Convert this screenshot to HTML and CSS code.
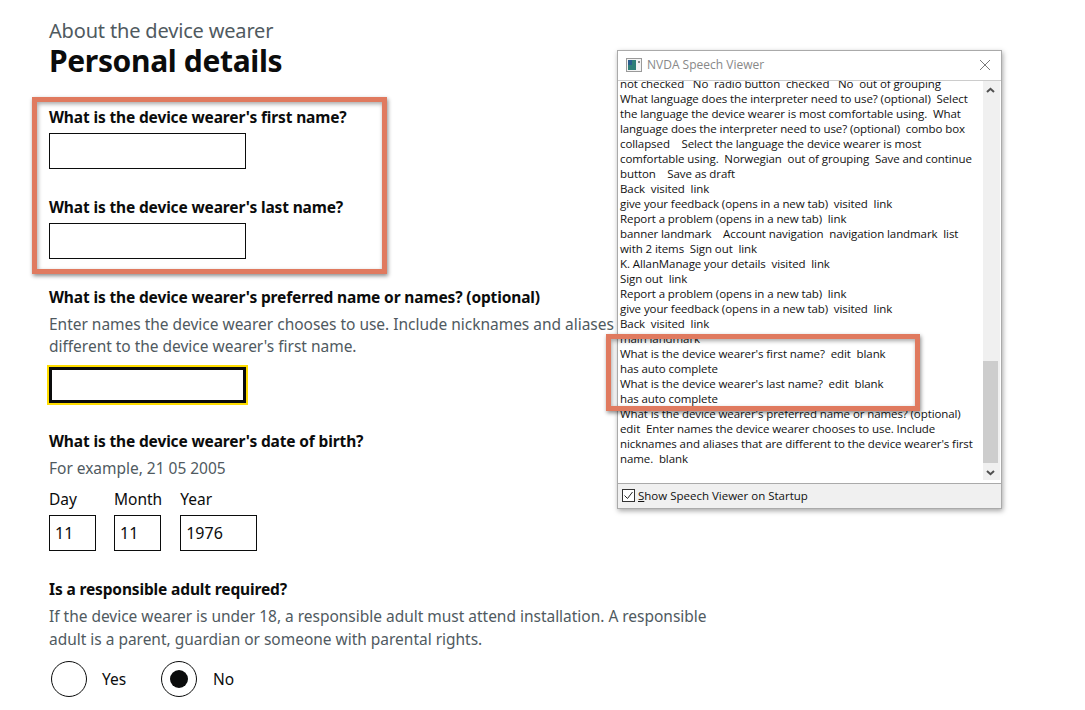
FILE: index.html
```html
<!DOCTYPE html>
<html lang="en">
<head>
<meta charset="utf-8">
<title>Personal details</title>
<link rel="stylesheet" href="styles.css">
</head>
<body>
<main class="form">
  <div class="caption">About the device wearer</div>
  <h1 class="title">Personal details</h1>

  <div class="group first">
    <label class="label">What is the device wearer's first name?</label>
    <div class="input wide"></div>
  </div>
  <div class="group g-last">
    <label class="label">What is the device wearer's last name?</label>
    <div class="input wide"></div>
  </div>
  <div class="group g-pref">
    <label class="label">What is the device wearer's preferred name or names? (optional)</label>
    <p class="hint">Enter names the device wearer chooses to use. Include nicknames and aliases that are<br>different to the device wearer's first name.</p>
    <div class="input wide focused"></div>
  </div>
  <div class="group g-dob">
    <label class="label">What is the device wearer's date of birth?</label>
    <p class="hint one">For example, 21 05 2005</p>
    <div class="date">
      <div class="date-item"><span class="date-label">Day</span><div class="input small">11</div></div>
      <div class="date-item"><span class="date-label">Month</span><div class="input small">11</div></div>
      <div class="date-item"><span class="date-label">Year</span><div class="input year">1976</div></div>
    </div>
  </div>
  <div class="group g-adult">
    <label class="label">Is a responsible adult required?</label>
    <p class="hint">If the device wearer is under 18, a responsible adult must attend installation. A responsible<br>adult is a parent, guardian or someone with parental rights.</p>
    <div class="radios">
      <div class="radio-item"><span class="radio"></span><span class="radio-label">Yes</span></div>
      <div class="radio-item"><span class="radio checked"></span><span class="radio-label">No</span></div>
    </div>
  </div>
</main>

<section class="viewer">
  <header class="viewer-title">
    <svg class="app-icon" width="16" height="14" viewBox="0 0 16 14"><rect x="0.5" y="0.5" width="15" height="13" fill="#f4f4f4" stroke="#9a9a9a"/><rect x="2" y="2" width="8" height="10" fill="#2f7f78"/><rect x="2" y="2" width="4" height="5" fill="#2a5f8f"/><rect x="12" y="3" width="2" height="2" fill="#8a8a8a"/></svg>
    <span class="viewer-name">NVDA Speech Viewer</span>
    <svg class="close" width="12" height="12" viewBox="0 0 12 12"><path d="M1 1l10 10M11 1L1 11" stroke="#7a7a7a" stroke-width="1" fill="none"/></svg>
  </header>
  <div class="viewer-body">
    <div class="log">
      <div>not checked   No  radio button  checked   No  out of grouping</div>
      <div>What language does the interpreter need to use? (optional)  Select</div>
      <div>the language the device wearer is most comfortable using.  What</div>
      <div>language does the interpreter need to use? (optional)  combo box</div>
      <div>collapsed    Select the language the device wearer is most</div>
      <div>comfortable using.  Norwegian  out of grouping  Save and continue</div>
      <div>button    Save as draft</div>
      <div>Back  visited  link</div>
      <div>give your feedback (opens in a new tab)  visited  link</div>
      <div>Report a problem (opens in a new tab)  link</div>
      <div>banner landmark    Account navigation  navigation landmark  list</div>
      <div>with 2 items  Sign out  link</div>
      <div>K. AllanManage your details  visited  link</div>
      <div>Sign out  link</div>
      <div>Report a problem (opens in a new tab)  link</div>
      <div>give your feedback (opens in a new tab)  visited  link</div>
      <div>Back  visited  link</div>
      <div>main landmark</div>
      <div>What is the device wearer's first name?  edit  blank</div>
      <div>has auto complete</div>
      <div>What is the device wearer's last name?  edit  blank</div>
      <div>has auto complete</div>
      <div>What is the device wearer's preferred name or names? (optional)</div>
      <div>edit  Enter names the device wearer chooses to use. Include</div>
      <div>nicknames and aliases that are different to the device wearer's first</div>
      <div>name.  blank</div>
    </div>
    <div class="scrollbar">
      <svg class="arrow" width="17" height="16" viewBox="0 0 17 16"><path d="M4 11l3.5-3.2L11 11" stroke="#505050" stroke-width="2" fill="none"/></svg>
      <div class="track"><div class="thumb"></div></div>
      <svg class="arrow" width="17" height="16" viewBox="0 0 17 16"><path d="M4 7l3.5 3.2L11 7" stroke="#505050" stroke-width="2" fill="none"/></svg>
    </div>
  </div>
  <footer class="viewer-foot">
    <svg width="13" height="13" viewBox="0 0 13 13"><rect x="0.5" y="0.5" width="12" height="12" fill="#fff" stroke="#333"/><path d="M2.5 6.5l3 3 5-6.5" stroke="#222" fill="none"/></svg>
    <span><u>S</u>how Speech Viewer on Startup</span>
  </footer>
</section>

<div class="mark mark-form"></div>
<div class="mark mark-log"></div>
</body>
</html>
```

FILE: styles.css
```css
* { box-sizing: border-box; }
html, body { margin: 0; padding: 0; background: #fff; }
body { width: 1085px; height: 710px; overflow: hidden; position: relative; color: #0b0c0c; font-family: "Noto Sans", sans-serif; }

.form { padding: 19px 0 0 49px; }
.caption { font-size: 20px; line-height: 24px; color: #505a5f; letter-spacing: -0.17px; }
.title { margin: 0; font-size: 30px; line-height: 36px; font-weight: 700; letter-spacing: -0.35px; }

.group { display: block; }
.first { margin-top: 28px; }
.g-last { margin-top: 28px; }
.g-pref { margin-top: 28px; }
.g-dob { margin-top: 28px; }
.g-adult { margin-top: 28px; }

.label { display: block; font-size: 15.5px; line-height: 20px; font-weight: 700; letter-spacing: -0.14px; }
.hint { margin: 6px 0 10px; font-size: 15.5px; line-height: 22px; color: #505a5f; white-space: nowrap; letter-spacing: -0.02px; }
.hint.one { margin: 6px 0 9px; }
.g-adult .hint { margin: 5.5px 0 0; line-height: 23px; }

.input { border: 1.5px solid #0b0c0c; height: 36px; margin-top: 6px; font-size: 16px; line-height: 34px; padding-left: 5px; background: #fff; }
.wide { width: 197px; }
.focused { border-width: 3px; outline: 2px solid #fd0; margin-top: 10px; height: 36px; }
.small { width: 47px; }
.year { width: 77px; }

.date { display: flex; gap: 18px; }
.date-item { display: flex; flex-direction: column; }
.date-label { font-size: 15.5px; line-height: 22px; }
.date .input { margin-top: 5px; }

.radios { display: flex; margin-top: 10.5px; padding-left: 2px; }
.radio-item { display: flex; align-items: center; }
.radio { position: relative; width: 36px; height: 36px; border: 1.5px solid #0b0c0c; border-radius: 50%; }
.radio.checked::after { content: ""; position: absolute; left: 7.5px; top: 7.5px; width: 18px; height: 18px; border-radius: 50%; background: #0b0c0c; }
.radio-label { font-size: 15.5px; margin-left: 15px; width: 59px; }
.radio-item + .radio-item .radio-label { margin-left: 16px; }

.viewer { position: absolute; left: 617px; top: 50px; width: 385px; height: 459px; border: 1px solid #aaa; background: #fff; box-shadow: 1px 2px 5px rgba(0,0,0,.35); display: flex; flex-direction: column; font-family: "Open Sans", sans-serif; }
.viewer-title { height: 30px; display: flex; align-items: center; padding: 0 10px 2px 8px; gap: 5px; border-bottom: 1px solid #ccc; font-size: 12px; color: #888; flex: none; }
.viewer-name { flex: 1; }
.viewer-body { flex: 1; display: flex; overflow: hidden; min-height: 0; padding-bottom: 3px; }
.log { flex: 1; padding: 0 0 0 2px; margin-top: -5px; font-size: 11.5px; line-height: 15px; color: #111; letter-spacing: -0.09px; }
.log div { white-space: pre; }
.scrollbar { width: 17px; margin-right: 1px; background: #f0f0f0; display: flex; flex-direction: column; flex: none; }
.arrow { flex: none; }
.track { flex: 1; position: relative; }
.thumb { position: absolute; left: 0; right: 2px; bottom: 1px; height: 102px; background: #cdcdcd; }
.viewer-foot { height: 25px; flex: none; background: #f0f0f0; border-top: 1px solid #aaa; display: flex; align-items: center; gap: 3px; padding: 0 0 2px 4px; font-size: 11.5px; color: #111; }

.mark { position: absolute; border: 5px solid #e07a5f; box-shadow: 1px 2px 4px rgba(0,0,0,.45), inset 1px 2px 4px rgba(0,0,0,.35); }
.mark-form { left: 32px; top: 97px; width: 355px; height: 177px; }
.mark-log { left: 606px; top: 334px; width: 314px; height: 77px; }
```
